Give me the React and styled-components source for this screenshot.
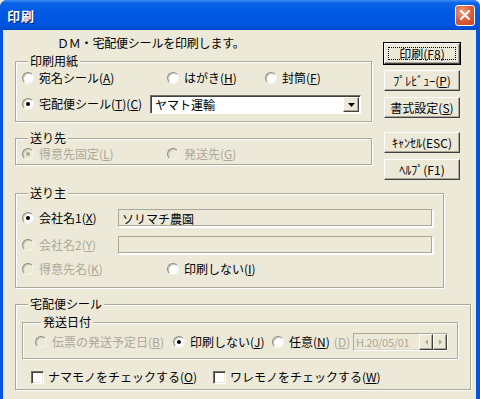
import React from "react";
import styled, { createGlobalStyle } from "styled-components";

const GlobalStyle = createGlobalStyle`
  html, body {
    margin: 0;
    padding: 0;
    width: 480px;
    height: 399px;
    overflow: hidden;
    background: #ece9d8;
  }
  body {
    font-family: "Noto Sans CJK JP", "Liberation Sans", sans-serif;
    font-size: 12px;
    color: #000;
  }
`;

const Window = styled.div`
  width: 480px;
  height: 399px;
  display: flex;
  flex-direction: column;
  background: #0055e5;
  border-radius: 7px 7px 0 0;
  overflow: hidden;
`;

const TitleBar = styled.div`
  height: 30px;
  flex: none;
  display: flex;
  align-items: center;
  justify-content: space-between;
  padding: 0 5px 0 7px;
  box-sizing: border-box;
  background: linear-gradient(
    to bottom,
    #3d8ff5 0%,
    #0a63e6 10%,
    #0058e4 45%,
    #0055e0 85%,
    #0049c6 100%
  );
`;

const Title = styled.span`
  color: #fff;
  font-weight: bold;
  font-size: 13px;
  letter-spacing: 1px;
  text-shadow: 1px 1px 0 #0a1883;
`;

const CloseButton = styled.div`
  width: 20px;
  height: 21px;
  box-sizing: border-box;
  border: 1px solid #fff;
  border-radius: 3px;
  display: flex;
  align-items: center;
  justify-content: center;
  background: radial-gradient(circle at 35% 30%, #f0a080 0%, #e0623d 45%, #c83c1c 100%);
`;

const Body = styled.div`
  flex: 1;
  margin: 0 4px 0 3px;
  background: #ece9d8;
  padding: 6px 0 0 12px;
  display: flex;
  flex-direction: column;
`;

const TopSection = styled.div`
  display: flex;
  align-items: flex-start;
  gap: 12px;
  height: 143px;
`;

const LeftColumn = styled.div`
  display: flex;
  flex-direction: column;
`;

const Intro = styled.div`
  line-height: 14px;
  margin-left: 42px;
  letter-spacing: -0.2px;
`;

const ButtonColumn = styled.div`
  display: flex;
  flex-direction: column;
  padding-top: 7px;
`;

const Button = styled.div`
  width: 76px;
  height: 21px;
  margin-top: ${(p) => p.$mt || 0}px;
  box-sizing: border-box;
  display: flex;
  align-items: center;
  justify-content: center;
  background: #ece9d8;
  border: 1px solid;
  border-color: #fff #404040 #404040 #fff;
  box-shadow: inset -1px -1px 0 #aca899;
  position: relative;
  font-size: 12px;
  line-height: 14px;
  ${(p) =>
    p.$default &&
    `
    outline: 1px solid #000;
    &::after {
      content: "";
      position: absolute;
      inset: 3px;
      border: 1px dotted #000;
    }
  `}
`;

const Group = styled.fieldset`
  margin: ${(p) => p.$mt || 0}px 0 0 0;
  padding: ${(p) => p.$pad || "0"};
  width: ${(p) => p.$w}px;
  box-sizing: border-box;
  min-width: 0;
  border: 1px solid #aca899;
  box-shadow: inset 1px 1px 0 #fff, 1px 1px 0 #fff;
  display: flex;
  flex-direction: column;
  gap: ${(p) => p.$gap || 0}px;
`;

const Legend = styled.legend`
  margin-left: 6px;
  padding: 0 2px;
  line-height: 14px;
  background: #ece9d8;
`;

const Row = styled.div`
  display: flex;
  align-items: center;
  height: ${(p) => p.$h}px;
  margin-left: ${(p) => p.$ml || 0}px;
  padding-right: ${(p) => p.$pr || 0}px;
`;

const Item = styled.label`
  display: flex;
  align-items: center;
  width: ${(p) => (p.$w ? `${p.$w}px` : "auto")};
  flex: none;
  line-height: 14px;
  color: ${(p) => (p.$disabled ? "#aca899" : "#000")};
  white-space: nowrap;
`;

const Circle = styled.span`
  width: 12px;
  height: 12px;
  box-sizing: border-box;
  border-radius: 50%;
  margin-right: 5px;
  flex: none;
  display: flex;
  align-items: center;
  justify-content: center;
  background: ${(p) => (p.$disabled ? "#ece9d8" : "#fff")};
  border: 1px solid;
  border-color: #8d8b80 #f4f3ee #f4f3ee #8d8b80;
  box-shadow: inset 1px 1px 0 #c8c6b8;
`;

const Dot = styled.span`
  width: 4px;
  height: 4px;
  border-radius: 50%;
  background: ${(p) => (p.$disabled ? "#aca899" : "#000")};
`;

const Box = styled.span`
  width: 13px;
  height: 13px;
  box-sizing: border-box;
  margin-right: 4px;
  flex: none;
  background: #fff;
  border: 1px solid;
  border-color: #716f64 #fff #fff #716f64;
  box-shadow: inset 1px 1px 0 #404040, inset -1px -1px 0 #ece9d8;
`;

const Key = styled.span`
  text-decoration: underline;
`;

const Combo = styled.div`
  width: 211px;
  height: 19px;
  box-sizing: border-box;
  display: flex;
  align-items: center;
  justify-content: space-between;
  background: #fff;
  border: 1px solid;
  border-color: #716f64 #fff #fff #716f64;
  box-shadow: inset 1px 1px 0 #404040;
  padding: 1px 1px 0 4px;
`;

const ComboText = styled.span`
  line-height: 14px;
`;

const ArrowButton = styled.div`
  width: ${(p) => p.$w || 16}px;
  height: ${(p) => p.$h || 15}px;
  box-sizing: border-box;
  display: flex;
  align-items: center;
  justify-content: center;
  background: #ece9d8;
  border: 1px solid;
  border-color: #fff #404040 #404040 #fff;
  box-shadow: inset -1px -1px 0 #aca899;
`;

const TextField = styled.div`
  width: 315px;
  height: 18px;
  box-sizing: border-box;
  padding: 1px 3px 0;
  display: flex;
  align-items: center;
  line-height: 14px;
  border: 1px solid;
  border-color: #aca899 #fff #fff #aca899;
  box-shadow: inset -1px -1px 0 #aca899, 1px 1px 0 #fff;
`;

const DisabledText = styled.span`
  color: #aca899;
  margin-left: 4px;
  flex: none;
  line-height: 14px;
`;

const DateField = styled.div`
  width: 95px;
  height: 18px;
  margin-left: auto;
  box-sizing: border-box;
  display: flex;
  align-items: center;
  justify-content: space-between;
  padding: 0 0 0 2px;
  border: 1px solid;
  border-color: #aca899 #fff #fff #aca899;
  box-shadow: inset -1px -1px 0 #d8d5c6;
  color: #aca899;
  line-height: 14px;
  font-size: 11px;
  letter-spacing: -0.3px;
  white-space: nowrap;
  overflow: hidden;
`;

const Spin = styled.div`
  display: flex;
  flex: none;
`;

function Radio({ checked, disabled, w, children }) {
  return (
    <Item $w={w} $disabled={disabled}>
      <Circle $disabled={disabled}>{checked && <Dot $disabled={disabled} />}</Circle>
      {children}
    </Item>
  );
}

function Check({ w, children }) {
  return (
    <Item $w={w}>
      <Box />
      {children}
    </Item>
  );
}

function Triangle({ dir, color }) {
  const pts = {
    down: "0,0 7,0 3.5,4",
    left: "3,0 3,6 0,3",
    right: "0,0 0,6 3,3",
  };
  const size = dir === "down" ? [7, 4] : [3, 6];
  return (
    <svg width={size[0]} height={size[1]} viewBox={`0 0 ${size[0]} ${size[1]}`}>
      <polygon points={pts[dir]} fill={color} />
    </svg>
  );
}

export default function App() {
  return (
    <>
      <GlobalStyle />
      <Window>
        <TitleBar>
          <Title>印刷</Title>
          <CloseButton>
            <svg width="10" height="10" viewBox="0 0 10 10">
              <path d="M1 1 L9 9 M9 1 L1 9" stroke="#fff" strokeWidth="2" strokeLinecap="square" />
            </svg>
          </CloseButton>
        </TitleBar>
        <Body>
          <TopSection>
            <LeftColumn>
              <Intro>ＤＭ・宅配便シールを印刷します。</Intro>
              <Group $w={357} $mt={4} $pad="0 0 7px 6px" $gap={6}>
                <Legend>印刷用紙</Legend>
                <Row $h={20}>
                  <Radio w={145}>
                    宛名シール(<Key>A</Key>)
                  </Radio>
                  <Radio w={98}>
                    はがき(<Key>H</Key>)
                  </Radio>
                  <Radio>
                    封筒(<Key>F</Key>)
                  </Radio>
                </Row>
                <Row $h={20}>
                  <Radio w={128} checked>
                    宅配便シール(<Key>T</Key>)(<Key>C</Key>)
                  </Radio>
                  <Combo>
                    <ComboText>ヤマト運輸</ComboText>
                    <ArrowButton>
                      <Triangle dir="down" color="#000" />
                    </ArrowButton>
                  </Combo>
                </Row>
              </Group>
              <Group $w={357} $mt={9} $pad="0 0 1px 6px">
                <Legend>送り先</Legend>
                <Row $h={18}>
                  <Radio w={145} checked disabled>
                    得意先固定(<Key>L</Key>)
                  </Radio>
                  <Radio disabled>
                    発送先(<Key>G</Key>)
                  </Radio>
                </Row>
              </Group>
            </LeftColumn>
            <ButtonColumn>
              <Button $default>印刷(F8)</Button>
              <Button $mt={6}>
                ﾌﾟﾚﾋﾞｭｰ(<Key>P</Key>)
              </Button>
              <Button $mt={6}>
                書式設定(<Key>S</Key>)
              </Button>
              <Button $mt={14}>ｷｬﾝｾﾙ(ESC)</Button>
              <Button $mt={6}>ﾍﾙﾌﾟ(F1)</Button>
            </ButtonColumn>
          </TopSection>
          <Group $w={429} $mt={7} $pad="9px 0 9px 6px">
            <Legend>送り主</Legend>
            <Row $h={18}>
              <Radio w={96} checked>
                会社名1(<Key>X</Key>)
              </Radio>
              <TextField>ソリマチ農園</TextField>
            </Row>
            <Row $h={18} style={{ marginTop: 9 }}>
              <Radio w={96} disabled>
                会社名2(<Key>Y</Key>)
              </Radio>
              <TextField />
            </Row>
            <Row $h={18} style={{ marginTop: 6 }}>
              <Radio w={145} disabled>
                得意先名(<Key>K</Key>)
              </Radio>
              <Radio>
                印刷しない(<Key>I</Key>)
              </Radio>
            </Row>
          </Group>
          <Group $w={456} $mt={9} $pad="0 0 3px 6px" $gap={9}>
            <Legend>宅配便シール</Legend>
            <Group $w={436} $mt={4} $pad="3px 0 6px 12px">
              <Legend>発送日付</Legend>
              <Row $h={20} $pr={9}>
                <Radio w={138} disabled>
                  伝票の発送予定日(<Key>B</Key>)
                </Radio>
                <Radio w={99} checked>
                  印刷しない(<Key>J</Key>)
                </Radio>
                <Radio>
                  任意(<Key>N</Key>)
                </Radio>
                <DisabledText>
                  (<Key>D</Key>)
                </DisabledText>
                <DateField>
                  <span>H.20/05/01</span>
                  <Spin>
                    <ArrowButton $w={14} $h={16}>
                      <Triangle dir="left" color="#aca899" />
                    </ArrowButton>
                    <ArrowButton $w={14} $h={16}>
                      <Triangle dir="right" color="#aca899" />
                    </ArrowButton>
                  </Spin>
                </DateField>
              </Row>
            </Group>
            <Row $h={18} $ml={9}>
              <Check w={182}>
                ナマモノをチェックする(<Key>O</Key>)
              </Check>
              <Check>
                ワレモノをチェックする(<Key>W</Key>)
              </Check>
            </Row>
          </Group>
        </Body>
      </Window>
    </>
  );
}
